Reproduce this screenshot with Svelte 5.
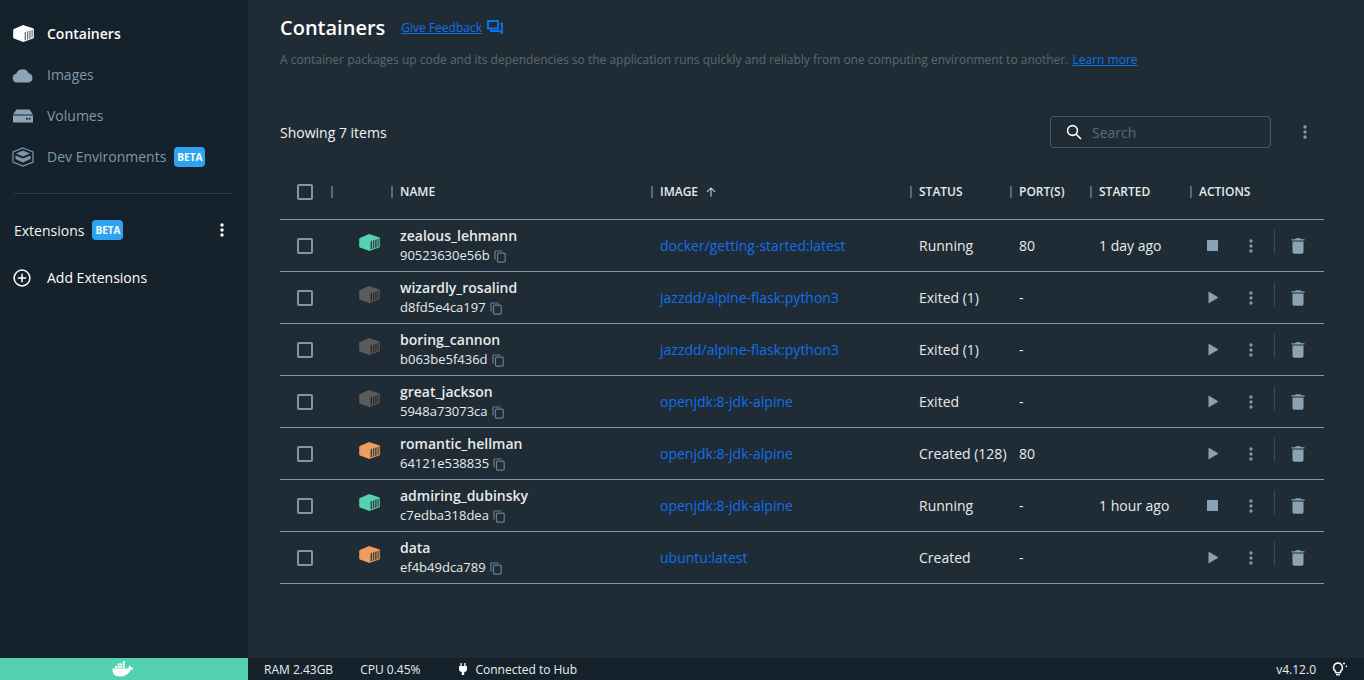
<script>
    const containers = [
        { name: 'zealous_lehmann', id: '90523630e56b', image: 'docker/getting-started:latest', status: 'Running', port: '80', started: '1 day ago', tone: 'running' },
        { name: 'wizardly_rosalind', id: 'd8fd5e4ca197', image: 'jazzdd/alpine-flask:python3', status: 'Exited (1)', port: '-', started: '', tone: 'exited' },
        { name: 'boring_cannon', id: 'b063be5f436d', image: 'jazzdd/alpine-flask:python3', status: 'Exited (1)', port: '-', started: '', tone: 'exited' },
        { name: 'great_jackson', id: '5948a73073ca', image: 'openjdk:8-jdk-alpine', status: 'Exited', port: '-', started: '', tone: 'exited' },
        { name: 'romantic_hellman', id: '64121e538835', image: 'openjdk:8-jdk-alpine', status: 'Created (128)', port: '80', started: '', tone: 'created' },
        { name: 'admiring_dubinsky', id: 'c7edba318dea', image: 'openjdk:8-jdk-alpine', status: 'Running', port: '-', started: '1 hour ago', tone: 'running' },
        { name: 'data', id: 'ef4b49dca789', image: 'ubuntu:latest', status: 'Created', port: '-', started: '', tone: 'created' }
    ];
</script>

{#snippet kebab()}
    <svg class="kebab" viewBox="0 0 4 14" width="4" height="14"><circle cx="2" cy="2" r="1.7" /><circle cx="2" cy="7" r="1.7" /><circle cx="2" cy="12" r="1.7" /></svg>
{/snippet}

{#snippet box(stripe)}
    <svg viewBox="0 0 21 17" width="21" height="17">
        <path class="box-body" d="M9.6 0.2 Q10.2 0 10.8 0.2 L20 3.2 Q20.8 3.5 20.8 4.3 V12.4 Q20.8 13.1 20.1 13.4 L10.9 16.8 Q10.3 17 9.7 16.8 L0.9 13.4 Q0.2 13.1 0.2 12.4 V5 Q0.2 4.3 0.9 4 Z" />
        <g fill={stripe}>
            <path d="M11.6 7.2 L13 6.8 V15 L11.6 15.5 Z" />
            <path d="M13.9 6.5 L15.3 6.1 V14.2 L13.9 14.7 Z" />
            <path d="M16.2 5.8 L17.6 5.4 V13.4 L16.2 13.9 Z" />
            <path d="M18.5 5.1 L19.7 4.8 V12.6 L18.5 13.1 Z" />
        </g>
    </svg>
{/snippet}

<div class="app">
    <div class="body">
        <aside class="sidebar">
            <nav class="nav">
                <div class="nav-item active">
                    <span class="nav-icon">{@render box('#6f7c86')}</span>
                    <span>Containers</span>
                </div>
                <div class="nav-item">
                    <span class="nav-icon">
                        <svg viewBox="0 0 22 16" width="22" height="16"><path d="M5 15.5 A4.4 4.4 0 0 1 4.2 6.8 A6.6 6.6 0 0 1 16.6 6.2 A4.8 4.8 0 0 1 17 15.5 Z" /></svg>
                    </span>
                    <span>Images</span>
                </div>
                <div class="nav-item">
                    <span class="nav-icon">
                        <svg viewBox="0 0 22 14" width="22" height="14"><path d="M4.5 0.5 H17.5 L21 5.5 H1 Z" /><path d="M1 6.5 H21 V13.5 H1 Z" /><circle cx="15" cy="9.8" r="1" fill="#15222c" /><circle cx="17.6" cy="9.8" r="1" fill="#15222c" /></svg>
                    </span>
                    <span>Volumes</span>
                </div>
                <div class="nav-item">
                    <span class="nav-icon">
                        <svg class="dev" viewBox="0 0 22 20" width="22" height="20"><path d="M11 1 L21 5 V15 L11 19 L1 15 V5 Z" /><path d="M11 3.5 L18 6.5 L11 9.5 L4 6.5 Z" class="dev-top" /><path d="M3.5 8.5 L11 11.6 L18.5 8.5 V12 L11 15.6 L3.5 12 Z" class="dev-top" /></svg>
                    </span>
                    <span>Dev Environments</span>
                    <span class="beta">BETA</span>
                </div>
            </nav>
            <div class="divider"></div>
            <div class="ext-head">
                <span>Extensions</span>
                <span class="beta">BETA</span>
                <span class="ext-menu">{@render kebab()}</span>
            </div>
            <div class="add-ext">
                <svg viewBox="0 0 18 18" width="18" height="18"><circle cx="9" cy="9" r="7.9" /><path d="M9 4.8 V13.2 M4.8 9 H13.2" /></svg>
                <span>Add Extensions</span>
            </div>
        </aside>

        <main class="main">
            <div class="title-row">
                <h1>Containers</h1>
                <a class="feedback" href="#feedback">Give Feedback</a>
                <svg class="feedback-icon" viewBox="0 0 16 14" width="16" height="14"><path d="M1 1 H11 V8.5 H1 Z M13 3.8 H15 V13 L12.5 11 H4 V8.5" /></svg>
            </div>
            <p class="desc">A container packages up code and its dependencies so the application runs quickly and reliably from one computing environment to another. <a href="#learn">Learn more</a></p>

            <div class="toolbar">
                <span class="showing">Showing 7 items</span>
                <div class="search">
                    <svg viewBox="0 0 16 16" width="16" height="16"><circle cx="6.5" cy="6.5" r="4.9" /><path d="M10.2 10.2 L15 15" /></svg>
                    <span>Search</span>
                </div>
                <span class="toolbar-menu">{@render kebab()}</span>
            </div>

            <div class="table">
                <div class="row head">
                    <div class="cell check-cell"><span class="check"></span></div>
                    <div class="cell"><i class="sep"></i></div>
                    <div class="cell"><i class="sep"></i>NAME</div>
                    <div class="cell"><i class="sep"></i>IMAGE
                        <svg class="sort" viewBox="0 0 10 10" width="10" height="10"><path d="M5 9.5 V1 M1 4.8 L5 1 L9 4.8" /></svg>
                    </div>
                    <div class="cell"><i class="sep"></i>STATUS</div>
                    <div class="cell"><i class="sep"></i>PORT(S)</div>
                    <div class="cell"><i class="sep"></i>STARTED</div>
                    <div class="cell"><i class="sep"></i>ACTIONS</div>
                </div>

                {#each containers as c}
                    <div class="row">
                        <div class="cell check-cell"><span class="check small"></span></div>
                        <div class="cell box-cell {c.tone}">{@render box(c.tone === 'exited' ? '#2c2c2c' : '#37423f')}</div>
                        <div class="cell name-cell">
                            <div class="name">{c.name}</div>
                            <div class="cid">
                                <span>{c.id}</span>
                                <svg viewBox="0 0 12 13" width="12" height="13"><path d="M8.5 1 H2 Q1 1 1 2 V9.5" /><rect x="3.5" y="3.2" width="7.7" height="9" rx="1.2" /></svg>
                            </div>
                        </div>
                        <div class="cell"><a class="image" href="#image">{c.image}</a></div>
                        <div class="cell">{c.status}</div>
                        <div class="cell">{c.port}</div>
                        <div class="cell">{c.started}</div>
                        <div class="cell actions">
                            <span class="act-main">
                                {#if c.tone === 'running'}
                                    <span class="stop"></span>
                                {:else}
                                    <svg class="play" viewBox="0 0 11 13" width="11" height="13"><path d="M0.5 0.5 L10.5 6.5 L0.5 12.5 Z" /></svg>
                                {/if}
                            </span>
                            <span class="act-menu">{@render kebab()}</span>
                            <span class="act-sep"></span>
                            <svg class="trash" viewBox="0 0 14 16" width="14" height="16"><path d="M4.8 0.3 H9.2 L10 1.3 H13.6 V2.5 H0.4 V1.3 H4 Z" /><path d="M1.5 3.6 H12.5 V14 Q12.5 15.7 10.8 15.7 H3.2 Q1.5 15.7 1.5 14 Z" /></svg>
                        </div>
                    </div>
                {/each}
            </div>
        </main>
    </div>

    <footer class="footer">
        <div class="whale">
            <svg viewBox="0 0 22 16" width="22" height="16">
                <path d="M0.4 7.6 H16.4 Q16.2 5.6 17.4 4.4 Q19 5.2 19.2 6.6 Q20.6 6.3 21.7 7.1 Q20.8 9 18.6 9 C16.8 13 13 15.6 7.6 15.6 C2.6 15.6 0.2 12.4 0.4 7.6 Z" />
                <g><rect x="3" y="4.9" width="2.1" height="2" /><rect x="5.6" y="4.9" width="2.1" height="2" /><rect x="8.2" y="4.9" width="2.1" height="2" /><rect x="10.8" y="4.9" width="2.1" height="2" /><rect x="5.6" y="2.4" width="2.1" height="2" /><rect x="8.2" y="2.4" width="2.1" height="2" /><rect x="10.8" y="2.4" width="2.1" height="2" /><rect x="10.8" y="0" width="2.1" height="2" /></g>
            </svg>
        </div>
        <div class="stats">
            <span class="ram">RAM 2.43GB</span>
            <span class="cpu">CPU 0.45%</span>
            <svg class="plug" viewBox="0 0 8 12" width="8" height="12"><path d="M1.5 0 H2.8 V3 H5.2 V0 H6.5 V3 H8 V6.5 Q8 8.7 5.2 9.2 V12 H2.8 V9.2 Q0 8.7 0 6.5 V3 H1.5 Z" /></svg>
            <span>Connected to Hub</span>
            <span class="version">v4.12.0</span>
            <svg class="bulb" viewBox="0 0 16 14" width="16" height="14"><path class="bulb-glass" d="M6 1 A4.6 4.6 0 0 1 8.4 9.4 V10.6 H3.6 V9.4 A4.6 4.6 0 0 1 6 1 Z" /><path class="bulb-base" d="M4 11.8 H8 V13.4 H4 Z" /><circle class="bulb-base" cx="12" cy="1.6" r="1" /><circle class="bulb-base" cx="14.4" cy="4.4" r="0.8" /></svg>
        </div>
    </footer>
</div>

<style>
    :global(body) {
        margin: 0;
        background: #202c35;
    }

    .app {
        display: flex;
        flex-direction: column;
        height: 100vh;
        overflow: hidden;
        font-family: "Open Sans", "Noto Sans", sans-serif;
        font-size: 14px;
        color: #e7eaec;
    }

    .body {
        display: flex;
        flex: 1;
        min-height: 0;
    }

    .sidebar {
        width: 248px;
        flex: none;
        background: #15222c;
        padding-top: 13px;
        box-sizing: border-box;
    }

    .nav-item {
        display: flex;
        align-items: center;
        height: 41px;
        padding-left: 12px;
        color: #7f97a9;
    }

    .nav-item.active {
        color: #fff;
        font-weight: 600;
    }

    .nav-icon {
        width: 35px;
        display: flex;
        align-items: center;
        fill: #8ea4b6;
    }

    .nav-item.active .nav-icon {
        fill: #fff;
        padding-left: 1px;
        width: 34px;
    }

    .nav-item.active .box-body {
        fill: #fff;
    }

    .dev path {
        fill: none;
        stroke: #7f97a9;
        stroke-width: 1.2;
    }

    .dev .dev-top {
        fill: #7f97a9;
        stroke: none;
    }

    .beta {
        margin-left: 8px;
        background: #2ea3f2;
        color: #fff;
        font-size: 10px;
        font-weight: 700;
        line-height: 20px;
        padding: 0 3px;
        border-radius: 4px;
    }

    .divider {
        height: 1px;
        margin: 16px 16px 0 14px;
        background: #2b3944;
    }

    .ext-head {
        display: flex;
        align-items: center;
        height: 40px;
        margin-top: 16px;
        padding-left: 14px;
        color: #f2f4f5;
    }

    .ext-menu {
        margin-left: auto;
        margin-right: 24px;
        display: flex;
        fill: #fff;
    }

    .add-ext {
        display: flex;
        align-items: center;
        gap: 16px;
        height: 41px;
        margin-top: 7px;
        padding-left: 13px;
        color: #fff;
    }

    .add-ext svg {
        fill: none;
        stroke: #fff;
        stroke-width: 1.5;
    }

    .main {
        flex: 1;
        min-width: 0;
        padding: 13px 40px 0 32px;
    }

    .title-row {
        display: flex;
        align-items: center;
        height: 28px;
    }

    h1 {
        margin: 0 16px 0 0;
        font-size: 20px;
        font-weight: 600;
        color: #fff;
    }

    .feedback {
        font-size: 12px;
        color: #0f6fee;
    }

    .feedback-icon {
        margin-left: 5px;
        fill: none;
        stroke: #0f6fee;
        stroke-width: 1.9;
    }

    .desc {
        margin: 10px 0 0;
        font-size: 12px;
        line-height: 18px;
        color: #5d676f;
    }

    .desc a {
        margin-left: 1px;
        color: #0f6fee;
    }

    .toolbar {
        display: flex;
        align-items: center;
        height: 32px;
        margin-top: 47px;
    }

    .showing {
        color: #f2f4f5;
    }

    .search {
        display: flex;
        align-items: center;
        gap: 10px;
        box-sizing: border-box;
        width: 221px;
        height: 32px;
        margin-left: auto;
        padding-left: 15px;
        border: 1px solid #4e5860;
        border-radius: 4px;
        color: #5d6a74;
    }

    .search svg {
        fill: none;
        stroke: #fff;
        stroke-width: 1.6;
    }

    .toolbar-menu {
        display: flex;
        margin: 0 17px 0 32px;
        fill: #7f97a9;
    }

    .table {
        margin-top: 16px;
    }

    .row {
        display: grid;
        grid-template-columns: 51px 60px 260px 259px 100px 80px 100px 134px;
        height: 52px;
        box-sizing: border-box;
        border-bottom: 1px solid #7f97a9;
    }

    .head {
        height: 56px;
        font-size: 12px;
        font-weight: 600;
    }

    .cell {
        display: flex;
        align-items: center;
        padding-left: 9px;
        white-space: nowrap;
    }

    .head .cell {
        padding-left: 0;
    }

    .sep {
        width: 2px;
        height: 12px;
        margin-right: 7px;
        background: #4f6e86;
    }

    .sort {
        margin-left: 8px;
        fill: none;
        stroke: #c3ccd3;
        stroke-width: 1.1;
    }

    .cell.check-cell {
        padding-left: 17px;
    }

    .check {
        width: 12px;
        height: 12px;
        border: 2px solid #7f97a9;
        border-radius: 2px;
    }

    .box-cell {
        padding-left: 28px;
        padding-bottom: 6px;
    }

    .box-cell.running .box-body {
        fill: #53d1b1;
    }

    .box-cell.exited .box-body {
        fill: #5b5b5b;
    }

    .box-cell.created .box-body {
        fill: #ee9c5c;
    }

    .name-cell {
        flex-direction: column;
        align-items: flex-start;
        justify-content: center;
    }

    .name {
        font-weight: 600;
        line-height: 18px;
    }

    .cid {
        display: flex;
        align-items: center;
        gap: 4px;
        font-size: 13px;
        line-height: 20px;
    }

    .cid svg {
        margin-top: 3px;
        fill: none;
        stroke: #677f92;
        stroke-width: 1.2;
    }

    .image {
        color: #0f6fee;
        text-decoration: none;
    }

    .actions {
        padding-left: 0;
        fill: #8ba2b4;
    }

    .act-main {
        display: flex;
        justify-content: center;
        width: 44px;
    }

    .play {
        margin-left: 2px;
    }

    .stop {
        width: 11px;
        height: 11px;
        background: #8ba2b4;
    }

    .act-menu {
        display: flex;
        justify-content: center;
        width: 34px;
        fill: #7f97a9;
    }

    .act-sep {
        width: 1px;
        height: 24px;
        margin: -7px 16px 0 6px;
        background: #3b4a55;
    }

    .footer {
        display: flex;
        flex: none;
        height: 22px;
        background: #15222c;
        font-size: 12px;
        color: #e9edf0;
    }

    .whale {
        display: flex;
        align-items: center;
        justify-content: center;
        width: 248px;
        padding-right: 2px;
        box-sizing: border-box;
        background: #53d1b1;
        fill: #fff;
    }

    .stats {
        display: flex;
        flex: 1;
        align-items: center;
        padding: 0 16px 0 16px;
    }

    .cpu {
        margin-left: 27px;
    }

    .plug {
        margin: 0 8px 0 39px;
        fill: #fff;
    }

    .version {
        margin-left: auto;
    }

    .bulb {
        margin-left: 16px;
    }

    .bulb-glass {
        fill: none;
        stroke: #fff;
        stroke-width: 1.4;
    }

    .bulb-base {
        fill: #fff;
    }
</style>
